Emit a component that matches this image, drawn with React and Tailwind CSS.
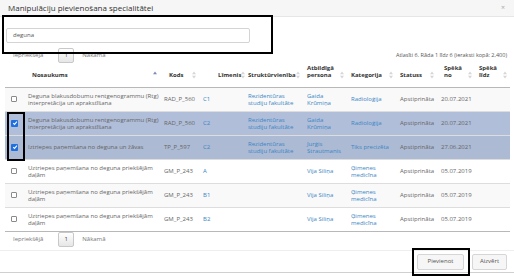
import React from "react";

const Chk = ({ on }) =>
  on ? (
    <span className="inline-flex w-[7px] h-[7px] rounded-[1px] bg-[#1e6fe0] items-center justify-center align-middle">
      <svg width="6" height="6" viewBox="0 0 10 10">
        <path d="M2 5.2 L4.2 7.4 L8.2 2.8" stroke="#fff" strokeWidth="1.8" fill="none" />
      </svg>
    </span>
  ) : (
    <span className="inline-block w-[6px] h-[6px] rounded-[1px] border border-[#8a8a8a] bg-white align-middle" />
  );

const SortIcon = ({ active }) => (
  <svg width="4" height="8" viewBox="0 0 4 8" className="shrink-0">
    <path d="M0 3.2 L2 0.6 L4 3.2 Z" fill={active ? "#7c8cb4" : "#d6d6d6"} />
    {!active && <path d="M0 4.8 L2 7.4 L4 4.8 Z" fill="#d6d6d6" />}
  </svg>
);

const rows = [
  {
    sel: false,
    name: ["Deguna blakusdobumu rentgenogrammu (Rtg)", "interpretācija un aprakstīšana"],
    code: "RAD_P_560",
    lvl: "C1",
    unit: ["Rezidentūras", "studiju fakultāte"],
    person: ["Gaida", "Krūmiņa"],
    cat: ["Radioloģija"],
    date: "20.07.2021",
  },
  {
    sel: true,
    name: ["Deguna blakusdobumu rentgenogrammu (Rtg)", "interpretācija un aprakstīšana"],
    code: "RAD_P_560",
    lvl: "C2",
    unit: ["Rezidentūras", "studiju fakultāte"],
    person: ["Gaida", "Krūmiņa"],
    cat: ["Radioloģija"],
    date: "20.07.2021",
  },
  {
    sel: true,
    name: ["Iztriepes paņemšana no deguna un žāvas"],
    code: "TP_P_597",
    lvl: "C2",
    unit: ["Rezidentūras", "studiju fakultāte"],
    person: ["Jurģis", "Strautmanis"],
    cat: ["Tiks precizēta"],
    date: "27.06.2021",
  },
  {
    sel: false,
    name: ["Uztriepes paņemšana no deguna priekšējām", "daļām"],
    code: "GM_P_243",
    lvl: "A",
    unit: [],
    person: ["Vija Siliņa"],
    cat: ["Ģimenes", "medicīna"],
    date: "05.07.2019",
  },
  {
    sel: false,
    name: ["Uztriepes paņemšana no deguna priekšējām", "daļām"],
    code: "GM_P_243",
    lvl: "B1",
    unit: [],
    person: ["Vija Siliņa"],
    cat: ["Ģimenes", "medicīna"],
    date: "05.07.2019",
  },
  {
    sel: false,
    name: ["Uztriepes paņemšana no deguna priekšējām", "daļām"],
    code: "GM_P_243",
    lvl: "B2",
    unit: [],
    person: ["Vija Siliņa"],
    cat: ["Ģimenes", "medicīna"],
    date: "05.07.2019",
  },
];

const Lines = ({ lines }) =>
  lines.map((l, i) => (
    <span key={i} className="block whitespace-nowrap">
      {l}
    </span>
  ));

const Pager = () => (
  <div className="flex items-center h-[15px] pl-[13px] text-[6px] text-[#777]">
    <span>Iepriekšējā</span>
    <span className="ml-[15px] w-[16px] h-[15px] flex items-center justify-center border border-[#c8c8c8] rounded-[2px] bg-gradient-to-b from-white to-[#e6e6e6] text-[#444]">
      1
    </span>
    <span className="ml-[8px]">Nākamā</span>
  </div>
);

const headers = [
  { label: ["Nosaukums"], pl: "pl-[8px]", active: true },
  { label: ["Kods"], pl: "pl-[9px]" },
  { label: ["Līmenis"], pl: "pl-[19px]" },
  { label: ["Struktūrvienība"], pl: "pl-[4px]" },
  { label: ["Atbildīgā", "persona"], pl: "pl-[4px]" },
  { label: ["Kategorija"], pl: "pl-[4px]" },
  { label: ["Statuss"], pl: "pl-[4px]" },
  { label: ["Spēkā", "no"], pl: "pl-[7px]" },
  { label: ["Spēkā", "līdz"], pl: "pl-[4px]" },
];

export default function App() {
  return (
    <div className="relative w-[514px] h-[278px] bg-white overflow-hidden font-['Open_Sans',sans-serif]">
      {/* header */}
      <div className="h-[17px] bg-[#f6f6f6] border-b border-[#e6e6e6] flex items-center justify-between pl-[8px] pr-[9px]">
        <span className="text-[8px] text-[#333]">Manipulāciju pievienošana specialitātei</span>
        <span className="text-[7px] text-[#aaa]">×</span>
      </div>

      {/* search */}
      <div className="pt-[11px] pl-[6px]">
        <div className="w-[244px] h-[15px] border border-[#d4d4d4] rounded-[2px] flex items-center pl-[6px] text-[6px] text-[#555]">
          deguna
        </div>
      </div>

      <div className="flex items-center justify-between mt-[5px] pr-[7px]">
        <Pager />
        <span className="text-[5.5px] text-[#555]">
          Atlasīti 6. Rāda 1 līdz 6 (ieraksti kopā: 2,400)
        </span>
      </div>

      {/* table */}
      <table className="ml-[5px] w-[505px] table-fixed border-collapse text-[6px] leading-[7px]">
        <colgroup>
          <col className="w-[19px]" />
          <col className="w-[136px]" />
          <col className="w-[39px]" />
          <col className="w-[45px]" />
          <col className="w-[59px]" />
          <col className="w-[44px]" />
          <col className="w-[49px]" />
          <col className="w-[41px]" />
          <col className="w-[38px]" />
          <col className="w-[35px]" />
        </colgroup>
        <thead>
          <tr className="border-b-[1.5px] border-[#b8b8b8]">
            <th className="p-0" />
            {headers.map((h, i) => (
              <th key={i} className="p-0 font-bold text-[#333] text-left">
                <div className={`h-[24px] flex justify-between pr-[3px] ${h.pl}`}>
                  <span className="self-end pb-[8px]">
                    <Lines lines={h.label} />
                  </span>
                  <span className="self-center">
                    <SortIcon active={h.active} />
                  </span>
                </div>
              </th>
            ))}
          </tr>
        </thead>
        <tbody>
          {rows.map((r, i) => {
            const bg = r.sel
              ? i % 2 === 0
                ? "bg-[#acbad4]"
                : "bg-[#b0bed9]"
              : i % 2 === 0
              ? "bg-[#f9f9f9]"
              : "bg-white";
            return (
              <tr key={i} className={`${bg} border-t border-[#dddddd] h-[24px]`}>
                <td className="pl-[6px] align-middle">
                  <Chk on={r.sel} />
                </td>
                <td className="pl-[4px] text-[#666]">
                  <Lines lines={r.name} />
                </td>
                <td className="pl-[4px] text-[#666]">{r.code}</td>
                <td className="pl-[4px] text-[#3c86c4]">{r.lvl}</td>
                <td className="pl-[4px] text-[#3c86c4]">
                  <Lines lines={r.unit} />
                </td>
                <td className="pl-[4px] text-[#3c86c4]">
                  <Lines lines={r.person} />
                </td>
                <td className="pl-[4px] text-[#3c86c4]">
                  <Lines lines={r.cat} />
                </td>
                <td className="pl-[4px] text-[#666]">Apstiprināta</td>
                <td className="pl-[4px] text-[#666]">{r.date}</td>
                <td />
              </tr>
            );
          })}
          <tr className="border-t-[1.5px] border-[#b8b8b8]">
            <td colSpan={10} className="p-0" />
          </tr>
        </tbody>
      </table>

      <div className="mt-0">
        <Pager />
      </div>

      {/* footer */}
      <div className="mt-[3px] border-t border-[#eeeeee] border-b border-b-[#d0d0d0] h-[23px] flex items-center justify-end gap-[8px] pr-[7px] text-[6px] text-[#555]">
        <span className="w-[47px] h-[16px] flex items-center justify-center border border-[#d6d6d6] rounded-[2px] bg-[#f6f6f6]">
          Pievienot
        </span>
        <span className="w-[35px] h-[16px] flex items-center justify-center border border-[#d6d6d6] rounded-[2px] bg-[#f6f6f6]">
          Aizvērt
        </span>
      </div>

      {/* annotation boxes */}
      <div className="absolute left-[2px] top-[15px] w-[271px] h-[39px] border-2 border-black" />
      <div className="absolute left-[7px] top-[112px] w-[18px] h-[49px] border-2 border-black" />
      <div className="absolute left-[412px] top-[248px] w-[58px] h-[28px] border-2 border-black" />
    </div>
  );
}
